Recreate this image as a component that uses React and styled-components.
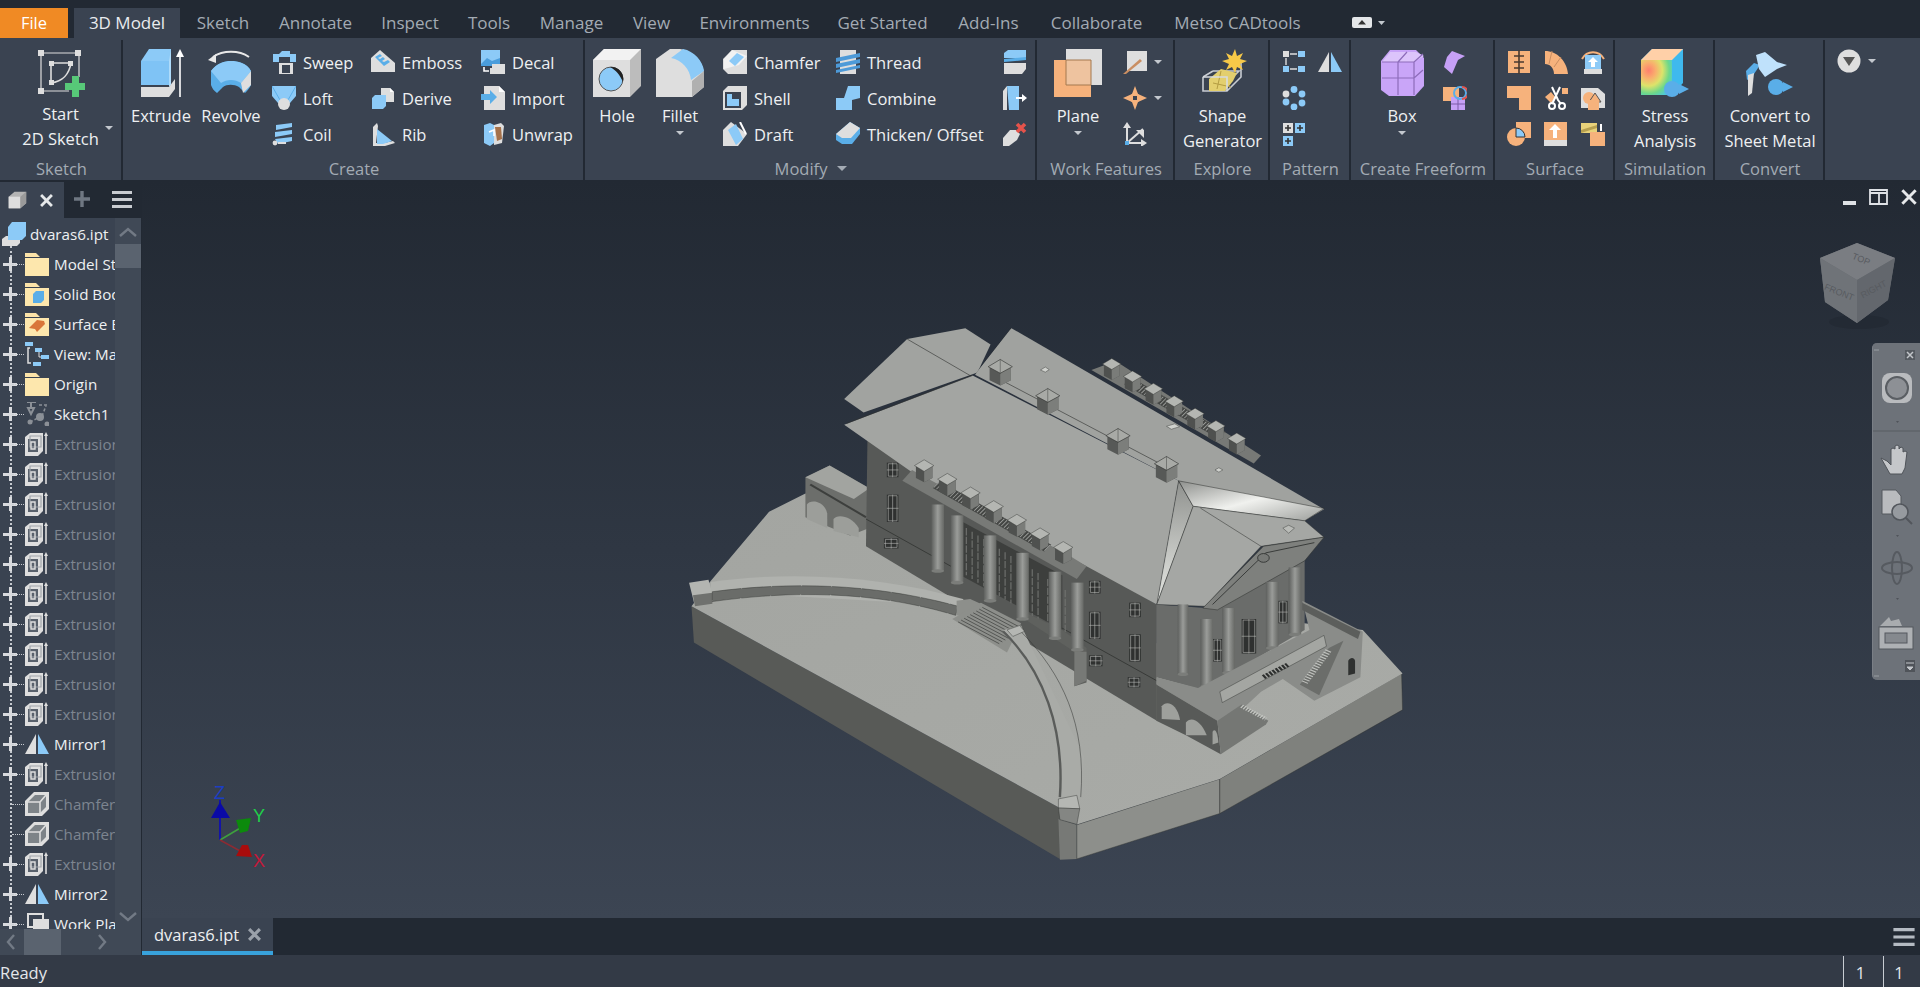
import React from "react";
import styled, { createGlobalStyle } from "styled-components";

const BLUE = "#8ccaf7";
const DBLUE = "#5aaee8";
const GREY = "#dedede";
const MID = "#b4b4b4";
const ORANGE = "#f6b27c";
const PURPLE = "#c6a0f6";
const DARK = "#3a4351";

const GlobalStyle = createGlobalStyle`
  html, body { margin: 0; padding: 0; height: 100%; overflow: hidden; background: #222933; }
  body { font-family: "Open Sans", "Noto Sans", sans-serif; }
  #root { height: 100%; }
`;

const Page = styled.div`
  display: flex;
  flex-direction: column;
  width: 1920px;
  height: 987px;
  overflow: hidden;
`;

const MenuBar = styled.div`
  display: flex;
  align-items: flex-end;
  height: 38px;
  flex: none;
  background: #222933;
`;

const FileTab = styled.div`
  width: 68px;
  height: 30px;
  margin-right: 6px;
  background: #f08a24;
  color: #fff;
  font-size: 16.5px;
  line-height: 30px;
  text-align: center;
`;

const MenuTab = styled.div`
  width: ${(p) => p.$w}px;
  height: 30px;
  margin-right: ${(p) => (p.$active ? 2 : 0)}px;
  font-size: 17px;
  line-height: 30px;
  text-align: center;
  color: ${(p) => (p.$active ? "#e9ecef" : "#a3abb4")};
  background: ${(p) => (p.$active ? DARK : "transparent")};
  white-space: nowrap;
`;

const Ribbon = styled.div`
  display: flex;
  height: 142px;
  flex: none;
  background: ${DARK};
`;

const Panel = styled.div`
  position: relative;
  display: flex;
  flex-direction: column;
  flex: none;
  width: ${(p) => p.$w}px;
  padding-top: 11px;
  box-sizing: border-box;
  &::after {
    content: "";
    position: absolute;
    right: 0;
    top: 2px;
    bottom: 0;
    width: 2px;
    background: ${(p) => (p.$last ? "transparent" : "#222933")};
  }
`;

const PanelBody = styled.div`
  display: flex;
  flex: 1;
  min-height: 0;
  padding-left: ${(p) => p.$pad ?? 0}px;
`;

const PanelTitle = styled.div`
  display: flex;
  justify-content: center;
  align-items: center;
  gap: 10px;
  height: 24px;
  flex: none;
  font-size: 16.5px;
  color: #a3abb4;
  white-space: nowrap;
`;

const LargeTool = styled.div`
  position: relative;
  display: flex;
  flex-direction: column;
  align-items: center;
  flex: none;
  width: ${(p) => p.$w}px;
  margin-left: ${(p) => p.$left ?? 0}px;
  color: #eef0f2;
  font-size: 16.5px;
  line-height: 25px;
  text-align: center;
  white-space: nowrap;
`;

const LargeIcon = styled.div`
  display: flex;
  justify-content: center;
  width: 100%;
  height: 48px;
  margin-bottom: 6px;
`;

const RaisedLabel = styled.span`
  margin-top: -2px;
`;

const Caret = styled.span`
  display: inline-block;
  width: 0;
  height: 0;
  border-left: 4px solid transparent;
  border-right: 4px solid transparent;
  border-top: 4px solid ${(p) => p.$color ?? "#c3c8ce"};
`;

const BelowCaret = styled(Caret)`
  margin-top: 3px;
`;

const SideCaret = styled(Caret)`
  position: absolute;
  right: 8px;
  top: 77px;
`;

const TitleCaret = styled(Caret)`
  border-left-width: 5px;
  border-right-width: 5px;
  border-top-width: 5px;
`;

const ToolColumn = styled.div`
  display: flex;
  flex-direction: column;
  gap: 12px;
  flex: none;
  width: ${(p) => p.$w}px;
  margin-left: ${(p) => p.$left ?? 0}px;
  margin-top: 1px;
`;

const SmallTool = styled.div`
  display: flex;
  align-items: center;
  gap: 7px;
  height: 24px;
  color: #eef0f2;
  font-size: 16.5px;
  white-space: nowrap;
`;

const WorkArea = styled.div`
  display: flex;
  flex: 1;
  min-height: 0;
`;

const Browser = styled.div`
  display: flex;
  flex-direction: column;
  flex: none;
  width: 142px;
  box-sizing: border-box;
  border-right: 1px solid #222933;
`;

const BrowserHead = styled.div`
  display: flex;
  align-items: center;
  height: 38px;
  flex: none;
  background: #222933;
`;

const BrowserTab = styled.div`
  display: flex;
  align-items: center;
  justify-content: space-between;
  box-sizing: border-box;
  align-self: flex-end;
  width: 64px;
  height: 36px;
  padding: 0 11px 0 7px;
  background: ${DARK};
`;

const BrowserHeadTools = styled.div`
  display: flex;
  align-items: center;
  gap: 22px;
  padding-left: 10px;
`;

const TreeWrap = styled.div`
  display: flex;
  flex: 1;
  min-height: 0;
  background: ${DARK};
`;

const Tree = styled.div`
  width: 115px;
  flex: none;
  padding-top: 1px;
  overflow: hidden;
  position: relative;
`;

const TreeGuide = styled.div`
  position: absolute;
  left: 10px;
  top: 28px;
  bottom: 0;
  border-left: 2px dotted #c6cad0;
`;

const TreeRow = styled.div`
  position: relative;
  display: flex;
  align-items: center;
  height: 30px;
  padding-left: ${(p) => (p.$root ? 2 : 25)}px;
  gap: ${(p) => (p.$root ? 4 : 5)}px;
  color: ${(p) => (p.$off ? "#7d8590" : "#eef0f2")};
  font-size: 15.2px;
  white-space: nowrap;
`;

const Expander = styled.div`
  position: absolute;
  left: 3px;
  top: 8px;
  width: 14px;
  height: 14px;
  background:
    linear-gradient(#d8dade, #d8dade) center / 14px 3px no-repeat,
    linear-gradient(#d8dade, #d8dade) center / 3px 14px no-repeat;
`;

const Leader = styled.div`
  position: absolute;
  left: 12px;
  top: 15px;
  width: 12px;
  border-top: 1px dotted #c6cad0;
`;

const VScroll = styled.div`
  position: relative;
  flex: 1;
  background: #404956;
`;

const ScrollThumb = styled.div`
  position: absolute;
  left: 0;
  right: 0;
  top: 26px;
  height: 24px;
  background: #5a636f;
`;

const Chevron = styled.div`
  position: absolute;
  left: 3px;
  ${(p) => (p.$down ? "bottom: 6px;" : "top: 8px;")}
  line-height: 0;
`;

const HScroll = styled.div`
  position: relative;
  height: 26px;
  flex: none;
  background: #404956;
`;

const HThumb = styled.div`
  position: absolute;
  left: 24px;
  top: 0;
  width: 37px;
  height: 100%;
  background: #5a636f;
`;

const HArrow = styled.div`
  position: absolute;
  top: 5px;
  ${(p) => (p.$right ? "left: 97px;" : "left: 6px;")}
  line-height: 0;
`;

const Main = styled.div`
  display: flex;
  flex-direction: column;
  flex: 1;
  min-width: 0;
`;

const Viewport = styled.div`
  position: relative;
  flex: 1;
  overflow: hidden;
  background: linear-gradient(#222933 0%, #3c4553 100%);
`;

const ModelCanvas = styled.svg`
  position: absolute;
  left: 518px;
  top: 130px;
  width: 760px;
  height: 570px;
`;

const Triad = styled.svg`
  position: absolute;
  left: 58px;
  top: 600px;
  width: 100px;
  height: 100px;
`;

const ViewCube = styled.svg`
  position: absolute;
  right: 17px;
  top: 60px;
  width: 90px;
  height: 90px;
`;

const WindowButtons = styled.div`
  position: absolute;
  right: 3px;
  top: 9px;
  display: flex;
  align-items: flex-end;
  gap: 13px;
`;

const NavBar = styled.div`
  position: absolute;
  right: 0;
  top: 163px;
  width: 48px;
  height: 337px;
  border-radius: 5px 0 0 5px;
  background: #6d7279;
  border-left: 1px solid #7a7f86;
  box-sizing: border-box;
`;

const NavIcon = styled.svg`
  position: absolute;
  left: 0;
  top: 0;
  width: 48px;
  height: 337px;
`;

const DocBar = styled.div`
  display: flex;
  justify-content: space-between;
  align-items: center;
  height: 37px;
  flex: none;
  background: #222933;
`;

const DocTab = styled.div`
  display: flex;
  align-items: center;
  gap: 9px;
  box-sizing: border-box;
  width: 131px;
  height: 100%;
  padding-left: 12px;
  background: ${DARK};
  border-bottom: 4px solid #38a2dc;
  color: #eef0f2;
  font-size: 16.5px;
  white-space: nowrap;
`;

const BarMenu = styled.div`
  margin-right: 5px;
  line-height: 0;
`;

const StatusBar = styled.div`
  display: flex;
  align-items: stretch;
  height: 32px;
  flex: none;
  background: #333a46;
  color: #e4e7ea;
  font-size: 16.5px;
`;

const StatusText = styled.div`
  flex: 1;
  line-height: 35px;
`;

const StatusCell = styled.div`
  width: 40px;
  box-sizing: border-box;
  margin-top: 1px;
  padding-right: ${(p) => p.$pad ?? 6}px;
  line-height: 33px;
  text-align: center;
  border-left: 1px solid #c8ccd2;
`;

const StatusLastCell = styled(StatusCell)`
  width: 37px;
`;

const Ico = ({ size = 24, children }) => (
  <svg width={size} height={size} viewBox="0 0 24 24" style={{ flex: "none" }}>
    {children}
  </svg>
);

const Big = ({ children }) => (
  <svg width="48" height="48" viewBox="0 0 48 48">
    {children}
  </svg>
);

const icons = {
  sweep: <><path d="M1 4h6l3-3h8v3h6v8h-6V7H7v5H1z" fill={BLUE} /><path d="M7 13h14v11H7z" fill={GREY} /><path d="M10 15h8v8h-8z" fill="#3a4351" /></>,
  loft: <><path d="M0 0h24v10l-6 7H6L0 10z" fill={BLUE} /><path d="M0 0l8 14M24 0l-8 14" stroke={DBLUE} /><circle cx="12" cy="18" r="6" fill={GREY} /></>,
  coil: <><path d="M4 3l16-2v4L4 8zM3 10l17-2v4L3 15zM3 17l17-2v4L6 22z" fill={BLUE} /><circle cx="3" cy="21" r="2.4" fill={GREY} /><path d="M6 21h8" stroke={GREY} strokeWidth="2" /></>,
  emboss: <><path d="M0 8L9 0l15 13v9H0z" fill={GREY} /><path d="M4 7l5-3 2 2-4 2 2 1 3-2 2 2-3 2 2 1 4-2 2 2-6 4z" fill={DBLUE} /></>,
  derive: <><path d="M10 2h9l4 4v10H10z" fill={GREY} /><path d="M19 2v4h4z" fill="#fff" /><path d="M1 12l3-3h11v11l-3 3H1z" fill={BLUE} /></>,
  rib: <><path d="M2 24V5l4-4 1 3-2 17h8l9-2 2 2-10 3z" fill={GREY} /><path d="M6 7l15 12-9 3H6z" fill={BLUE} /></>,
  decal: <><path d="M0 0h19v16H0z" fill={BLUE} /><path d="M0 14l6-6 5 3 8-3v8H0z" fill="#4a9ddc" /><path d="M11 14h13v10H9v-6h2z" fill={GREY} /><path d="M3 17v4h5" stroke="#fff" strokeWidth="1.6" fill="none" /></>,
  import: <><path d="M3 0h15l6 6v18H3z" fill={GREY} /><path d="M18 0v6h6z" fill="#fff" /><path d="M0 8h9V4l7 7-7 7v-4H0z" fill={DBLUE} /></>,
  unwrap: <><path d="M3 3l6-2 4 2v18l-4 3-6-3z" fill={BLUE} /><path d="M13 3l7-2 3 3-2 17-8 2z" fill={GREY} /><path d="M14 5h6l1 12-5 2z" fill="#a5714a" /><path d="M8 10l5-2v6" stroke="#fff" strokeWidth="1.6" fill="none" /></>,
  chamfer: <><path d="M0 9L9 0h15v24H5L0 19z" fill={GREY} /><path d="M1 19V9l8-9 15 6-8 9z" fill="#f2f2f2" /><path d="M6 11l8-8 7 4-9 9z" fill={BLUE} /></>,
  shell: <><path d="M0 5l5-5h19v19l-5 5H0z" fill={GREY} /><path d="M2 6h16v16H2z" fill="#3a4351" /><path d="M4 8h5v5h7v7H4z" fill={BLUE} /></>,
  draft: <><path d="M0 8l8-8 16 12-9 12H0z" fill={GREY} /><path d="M5 8l8-6 7 15-7 6z" fill={BLUE} /><path d="M17 0l6 12" stroke="#fff" strokeWidth="2" /></>,
  thread: <><path d="M4 0h16v24H4z" fill={GREY} /><path d="M0 8l24-5v4L0 12zM0 14l24-5v4L0 18zM0 20l24-5v3L0 23z" fill="#4d9ad8" /></>,
  combine: <path d="M0 12h8l4-12h12v12l-8 2v10H0z" fill={BLUE} />,
  thicken: <><path d="M0 12L14 0l10 6v6l-8 10H6l-6-4z" fill={DBLUE} /><path d="M0 12L14 0l10 6-9 10H6z" fill={GREY} /></>,
  split: <><path d="M1 3l4-3h18v8H1z" fill={BLUE} /><path d="M1 9l22-2v3L1 12z" fill={DBLUE} /><path d="M1 13h22v6l-4 5H1z" fill={GREY} /></>,
  move: <><path d="M0 5l4-5v24H0z" fill={GREY} /><path d="M4 0h12v24H6z" fill={BLUE} /><path d="M13 11h6V8l5 4-5 4v-3h-6z" fill="#fff" /></>,
  delete: <><path d="M0 16l7-8h6l4 4-3 6-8 6H0z" fill={GREY} /><path d="M14 2l8 8M22 2l-8 8" stroke="#e5534b" strokeWidth="3.6" /></>,
  workaxis: <><path d="M4 1h20v20H4z" fill={GREY} /><path d="M0 24L17 9l2 2L3 24z" fill="#c98e62" /></>,
  workpoint: <><path d="M12 0l3 8 9 4-9 4-3 8-3-8-9-4 9-4z" fill={ORANGE} /><circle cx="12" cy="12" r="5" fill={ORANGE} /><rect x="10" y="10" width="4" height="4" fill="#3a4351" /></>,
  ucs: <><path d="M4 4v17h17" stroke={GREY} strokeWidth="2" fill="none" /><path d="M4 0l4 6H0zM24 21l-6 4v-8z" fill={GREY} /><path d="M4 21L20 7" stroke={GREY} strokeWidth="2" /><path d="M13 8h8v8z" fill={GREY} /><rect x="2" y="19" width="4" height="4" fill={DBLUE} /></>,
  rect: <><rect x="1" y="1" width="6" height="6" fill={GREY} /><rect x="16" y="1" width="7" height="6" fill={BLUE} /><rect x="1" y="16" width="6" height="6" fill={BLUE} /><rect x="16" y="16" width="7" height="6" fill={BLUE} /><path d="M8 4h7M8 19h7M4 8v7" stroke={GREY} strokeWidth="1.4" /></>,
  mirror: <><path d="M11 2v20H0z" fill={GREY} /><path d="M13 2v20h11z" fill={BLUE} /></>,
  circ: <><circle cx="12" cy="3.5" r="3.4" fill={BLUE} /><circle cx="20" cy="8" r="3.4" fill={BLUE} /><circle cx="20" cy="17" r="3.4" fill={BLUE} /><circle cx="12" cy="21" r="3.4" fill={BLUE} /><circle cx="4" cy="16" r="3.4" fill={BLUE} /><circle cx="4" cy="8" r="3.4" fill={GREY} /></>,
  sketchpat: <><rect x="1" y="1" width="10" height="10" fill={GREY} /><rect x="13" y="1" width="10" height="10" fill={BLUE} /><rect x="1" y="14" width="10" height="10" fill={BLUE} /><path d="M3 6h6M6 3v6M15 6h6M18 3v6M3 19h6M6 16v6" stroke="#333" strokeWidth="1.6" /></>,
  freeface: <path d="M1 17l3-10 5-6 13 5-7 4-3 7-3 7z" fill={PURPLE} />,
  freeconv: <><rect x="0" y="1" width="16" height="14" fill={ORANGE} /><path d="M8 11h14v13H8z" fill={PURPLE} /><path d="M15 11v13M8 18h14" stroke="#7d5aa8" /><circle cx="17" cy="7" r="6" fill="none" stroke={DBLUE} strokeWidth="2" /><path d="M19 1a6 6 0 0 1 0 12" stroke="#e5534b" strokeWidth="2" fill="none" /></>,
  s1: <><rect x="1" y="1" width="22" height="22" fill={ORANGE} /><path d="M12 0v24M7 6h10M7 12h10M7 18h10" stroke="#4a3a30" strokeWidth="1.6" /></>,
  s2: <><path d="M1 1c12 0 22 10 23 23H10C10 18 6 14 1 14z" fill={ORANGE} /><path d="M8 1l-3 13M17 7l-7 10" stroke="#c98e62" /></>,
  s3: <><path d="M1 9c5-9 17-9 22 0" fill="none" stroke={ORANGE} strokeWidth="2" /><rect x="4" y="5" width="16" height="14" fill={BLUE} /><path d="M12 7l5 5h-3v5h-4v-5H7z" fill="#fff" /><rect x="3" y="19" width="18" height="5" fill={GREY} /></>,
  s4: <path d="M0 0h24v24H12V12H0z" fill={ORANGE} />,
  s5: <><rect x="18" y="2" width="6" height="6" fill={ORANGE} /><path d="M1 11l6-5 5 6-5 5z" fill={ORANGE} /><path d="M8 1l6 13 3 4M16 1l-6 13-2 4" stroke="#fff" strokeWidth="2" fill="none" /><circle cx="8" cy="20" r="3" fill="none" stroke="#fff" strokeWidth="2" /><circle cx="18" cy="20" r="3" fill="none" stroke="#fff" strokeWidth="2" /></>,
  s6: <><path d="M0 2h17l7 6v14H0z" fill={GREY} /><circle cx="8" cy="12" r="6" fill={ORANGE} /><path d="M14 7l6 9H8z" fill={ORANGE} stroke="#555" /><rect x="7" y="14" width="11" height="10" fill={ORANGE} /></>,
  s7: <><circle cx="9" cy="15" r="9" fill={ORANGE} /><path d="M9 0h15v16H9z" fill={ORANGE} /><path d="M9 6a9 9 0 0 1 9 9H9z" fill={BLUE} stroke="#333" /></>,
  s8: <><rect x="0" y="0" width="23" height="18" fill={ORANGE} /><path d="M11 2l6 6h-4v8h-4V8H5z" fill="#fff" /><rect x="0" y="18" width="23" height="6" fill={GREY} /></>,
  s9: <><rect x="0" y="1" width="16" height="10" fill="#e8d27a" /><path d="M0 8l16-5v3L0 11z" fill="#b7a04f" /><rect x="9" y="10" width="15" height="14" fill={ORANGE} /><path d="M20 2v7" stroke="#fff" strokeWidth="2" /></>,
  cube: <><path d="M2 8l7-6h14v14l-7 6H2z" fill={MID} /><path d="M2 8h14v14H2z" fill={GREY} /><path d="M16 8l7-6v14l-7 6z" fill="#9a9a9a" /></>,
  root: <><path d="M0 17l4-3h14v7l-3 3H0z" fill={GREY} /><path d="M6 5l4-5h14v14l-4 4H6z" fill={BLUE} /></>,
  folder: <><path d="M0 1h11l4 4H0z" fill="#fbe3a8" /><path d="M0 6h24v18H0z" fill="#fde7ad" /></>,
  solid: <><path d="M0 1h11l4 4H0z" fill="#fbe3a8" /><path d="M0 6h24v18H0z" fill="#fde7ad" /><path d="M8 12l3-3h8v9l-3 3H8z" fill={DBLUE} /></>,
  surface: <><path d="M0 1h11l4 4H0z" fill="#fbe3a8" /><path d="M0 6h24v18H0z" fill="#fde7ad" /><path d="M4 16l8-8 7 1 1 3-8 8-2-3z" fill="#d9763a" /></>,
  view: <><rect x="0" y="0" width="8" height="4" fill={BLUE} /><path d="M5 6H3v15h3" stroke={GREY} strokeWidth="1.5" fill="none" /><rect x="10" y="6" width="7" height="4" fill={BLUE} /><rect x="16" y="13" width="8" height="4" fill={BLUE} /><rect x="8" y="20" width="8" height="4" fill={BLUE} /><path d="M14 10v5h2" stroke={GREY} fill="none" /></>,
  sketch: <><path d="M2 0h9M6 0v6M3 6h6l-3 6z" stroke="#8b9097" strokeWidth="2" fill="none" /><path d="M5 20l12-6M17 14l4-10M14 3h8" stroke="#8b9097" strokeWidth="1.5" strokeDasharray="3 2" /><circle cx="15" cy="15" r="4" fill="#8b9097" /><circle cx="5" cy="20" r="2.5" fill="#8b9097" /><circle cx="22" cy="22" r="2.5" fill="#8b9097" /></>,
  extrusion: <><path d="M0 5l5-4h13v18l-5 5H0z" fill={GREY} /><path d="M3 7h10v13H3z" fill="#59616c" /><path d="M5 4h11v11H5z" fill="none" stroke="#9fa4aa" strokeWidth="1.2" /><path d="M6 10h4v7H6z" fill="none" stroke={GREY} strokeWidth="1.4" /><path d="M21 2v20" stroke={GREY} strokeWidth="1.6" /><path d="M21 0l2 4h-4z" fill={GREY} /></>,
  chamferTree: <><path d="M0 9L9 0h15v17l-7 7H0z" fill={GREY} /><path d="M3 10l7-7h11v12l-6 6H3z" fill="#7d8388" /><path d="M3 10h12v11M15 10l6-7" stroke={GREY} strokeWidth="1.6" fill="none" /></>,
  workplane: <><path d="M3 2h15v13H3z" fill="none" stroke={GREY} strokeWidth="2" /><path d="M8 7h16v13H8z" fill={GREY} /></>,
};

const Small = ({ icon, label }) => (
  <SmallTool>
    <Ico>{icons[icon]}</Ico>
    {label}
  </SmallTool>
);

const IconOnly = ({ icon, caret }) => (
  <SmallTool>
    <Ico>{icons[icon]}</Ico>
    {caret && <Caret />}
  </SmallTool>
);

const StartIcon = () => (
  <Big>
    <path d="M4 4h36M4 4v38M4 42h28M42 4v24" stroke={GREY} strokeWidth="1.2" fill="none" />
    <path d="M1 1h6v6H1zM38 1h6v6h-6zM1 39h6v6H1z" fill={GREY} />
    <path d="M14 14h20M14 14v20M14 34c12-2 18-8 20-20" stroke={GREY} strokeWidth="1.6" fill="none" />
    <path d="M12 12h5v5h-5zM31 12h5v5h-5zM12 31h5v5h-5z" fill={GREY} />
    <path d="M35 27h7v7h7v7h-7v7h-7v-7h-7v-7h7z" fill="#57c878" />
  </Big>
);
const ExtrudeIcon = () => (
  <Big>
    <path d="M4 12l8-12h22v36H4z" fill={BLUE} />
    <path d="M4 12h28v24H4z" fill="#7fc3f5" />
    <path d="M32 12l2-12v36l-2 2z" fill="#aedbfa" />
    <path d="M4 38h28l6-8v10l-6 8H4z" fill={GREY} />
    <path d="M43 48V4" stroke="#fff" strokeWidth="1.6" />
    <path d="M43 0l4 8h-8z" fill="#fff" />
  </Big>
);
const RevolveIcon = () => (
  <Big>
    <path d="M4 22c6-8 14-10 20-10s16 2 20 10v14c-2 4-4 6-6 8l-6-6c-5-3-12-3-16 0l-6 6c-3-2-5-5-6-8z" fill={DBLUE} />
    <path d="M4 22c6-8 14-10 20-10s16 2 20 10l-10 12c-6-4-14-4-20 0z" fill={BLUE} />
    <path d="M34 34l10-12v14l-8 8z" fill={GREY} />
    <path d="M6 8c10-7 26-7 36 0" stroke="#e8e8e8" strokeWidth="2" fill="none" />
    <path d="M1 11l8-6v9z" fill="#e8e8e8" />
  </Big>
);
const HoleIcon = () => (
  <Big>
    <path d="M0 11L11 0h37v37L37 48H0z" fill="#bcbcbc" />
    <path d="M0 11L11 0h37L37 11z" fill="#f2f2f2" />
    <path d="M0 11h37v37H0z" fill={GREY} />
    <circle cx="18" cy="30" r="12" fill={BLUE} stroke="#555" strokeWidth="1" />
    <path d="M17 18c8-1 15 6 13 15-3-7-7-12-13-15z" fill="#222" />
  </Big>
);
const FilletIcon = () => (
  <Big>
    <path d="M0 10L14 0h10c14 2 24 14 24 26v12l-12 10H0z" fill={GREY} />
    <path d="M15 9L27 0c11 2 20 12 21 22l-13 9C34 20 26 11 15 9z" fill={BLUE} />
    <path d="M36 48V32l12-10v16z" fill="#b0b0b0" />
  </Big>
);
const PlaneIcon = () => (
  <Big>
    <rect x="12" y="0" width="36" height="36" fill={GREY} />
    <rect x="0" y="11" width="37" height="37" fill={ORANGE} />
    <path d="M12 11h25v25H12z" fill="#eec39f" stroke="#a4784f" />
  </Big>
);
const ShapeIcon = () => (
  <Big>
    <path d="M14 22h26l-4 4M4 28l10-6M4 28v14h24l14-14V14" stroke="#c8ccd2" strokeWidth="1.6" fill="none" />
    <path d="M10 30l12-10 16 4-4 8-8 10H10z" fill="#e3cf6e" />
    <path d="M22 22l-4 18M14 34l18 4" stroke="#b49d42" />
    <path d="M4 28h24v14" stroke="#d8dbe0" strokeWidth="1.6" fill="none" />
    <path d="M36 0l2 7 6-3-3 6 7 2-7 3 3 6-6-3-2 6-3-6-6 3 3-6-7-3 7-2-3-6 6 3z" fill="#f7c948" />
  </Big>
);
const BoxIcon = () => (
  <Big>
    <path d="M3 12l9-11h26l8 8v28l-9 10H11l-8-6z" fill="#c7a3f7" />
    <path d="M4 13h32v33H11l-7-6zM36 13l9-8v32l-9 9z" fill="#c9a5f8" />
    <path d="M4 13l8-10h26l8 4-10 6z" fill="#dcc4fb" />
    <path d="M20 13v33M4 29h32M36 13v33M4 13h32M36 13l9-8M36 29l9-8M20 13l9-10" stroke="#8d6cba" strokeWidth="1.2" fill="none" />
  </Big>
);
const StressIcon = () => (
  <Big>
    <defs>
      <radialGradient id="stress" cx="25%" cy="30%" r="85%">
        <stop offset="0%" stopColor="#ff7f6e" />
        <stop offset="28%" stopColor="#f8b26d" />
        <stop offset="52%" stopColor="#dde36a" />
        <stop offset="78%" stopColor="#6dd88a" />
        <stop offset="100%" stopColor="#4fc9d9" />
      </radialGradient>
    </defs>
    <path d="M0 11L11 0h31v34L31 46H0z" fill="#3fb9ee" />
    <path d="M0 11L11 0h31L31 11z" fill="#ffd0a8" />
    <path d="M0 11h31v35H0z" fill="url(#stress)" />
    <circle cx="31" cy="40" r="8" fill={DBLUE} />
    <path d="M38 35l10 5-10 5z" fill={DBLUE} />
  </Big>
);
const ConvertIcon = () => (
  <Big>
    <path d="M0 22l8-8 6 2-8 12-5 3z" fill={DBLUE} />
    <path d="M10 6l9-3 12 10 10 3-10 4-12 8-6-8z" fill="#bfe1fb" />
    <path d="M2 26l6-2-2 20-4 3z" fill={GREY} />
    <circle cx="30" cy="38" r="8" fill={DBLUE} />
    <path d="M37 33l10 5-10 5z" fill={DBLUE} />
  </Big>
);

const Dropdown = () => (
  <svg width="24" height="24" viewBox="0 0 24 24">
    <circle cx="12" cy="12" r="11.5" fill={GREY} />
    <path d="M6 8h12l-6 9z" fill="#555" />
  </svg>
);

const CloseIcon = ({ size = 12, color = "#dfe2e6", w = 2.6 }) => (
  <svg width={size} height={size} viewBox="0 0 12 12">
    <path d="M1 1l10 10M11 1L1 11" stroke={color} strokeWidth={w} />
  </svg>
);

const PlusIcon = () => (
  <svg width="16" height="16" viewBox="0 0 16 16">
    <path d="M8 0v16M0 8h16" stroke="#6f7782" strokeWidth="3.4" />
  </svg>
);

const Burger = ({ w = 20, h = 17, color = "#c9ccd1" }) => (
  <svg width={w} height={h} viewBox="0 0 20 17">
    <path d="M0 1.5h20M0 8.5h20M0 15.5h20" stroke={color} strokeWidth="3" />
  </svg>
);

const ChevronIcon = ({ dir }) => {
  const paths = {
    up: "M2 10l8-7 8 7",
    down: "M2 3l8 7 8-7",
    left: "M8 1L2 8l6 7",
    right: "M2 1l6 7-6 7",
  };
  const horiz = dir === "left" || dir === "right";
  return (
    <svg width={horiz ? 10 : 20} height={horiz ? 16 : 13} viewBox={horiz ? "0 0 10 16" : "0 0 20 13"}>
      <path d={paths[dir]} stroke="#727a85" strokeWidth="2.4" fill="none" />
    </svg>
  );
};

const treeRows = [
  ["folder", "Model States:"],
  ["solid", "Solid Bodies(1)"],
  ["surface", "Surface Bodies(1)"],
  ["view", "View: Master"],
  ["folder", "Origin"],
  ["sketch", "Sketch1"],
  ...Array.from({ length: 10 }, (_, i) => ["extrusion", `Extrusion${i + 1}`, true]),
  ["mirror", "Mirror1"],
  ["extrusion", "Extrusion11", true],
  ["chamferTree", "Chamfer1", true, true],
  ["chamferTree", "Chamfer2", true, true],
  ["extrusion", "Extrusion12", true],
  ["mirror", "Mirror2"],
  ["workplane", "Work Plane1"],
];

const tabs = [
  ["Sketch", 82], ["Annotate", 103], ["Inspect", 86], ["Tools", 72], ["Manage", 93], ["View", 67],
  ["Environments", 139], ["Get Started", 117], ["Add-Ins", 95], ["Collaborate", 121], ["Metso CADtools", 161],
];

// roof posts sit along a line, so positions get worked out from two end points
const along = (x0, y0, x1, y1, n) =>
  Array.from({ length: n }, (_, i) => [x0 + ((x1 - x0) * i) / (n - 1), y0 + ((y1 - y0) * i) / (n - 1)]);

const Post = ({ x, y, s = 1 }) => (
  <g transform={`translate(${x} ${y}) scale(${s})`}>
    <path d="M-17 -12L0 -24 17 -12V22L0 34-17 22z" fill="#4f514f" />
    <path d="M0 4L17 -12V22L0 34z" fill="#7a7c79" />
    <path d="M-20 -12L0 -28 20 -12 0 4z" fill="#b4b6b2" stroke="#2d2f2e" strokeWidth="1" />
  </g>
);

const Chimney = ({ x, y }) => (
  <g transform={`translate(${x} ${y})`}>
    <path d="M-22 0L0 -12 22 0V35L0 50-22 35z" fill="#575957" />
    <path d="M0 15L22 0V35L0 50z" fill="#7c7e7b" />
    <path d="M-25 -2L0 -22 25 -2 0 16z" fill="#a8aaa6" stroke="#2d2f2e" strokeWidth="1.4" />
    <path d="M0 -22V16" stroke="#2d2f2e" strokeWidth="1" />
  </g>
);

const Win = ({ x, y, w = 24, h = 60 }) => (
  <g>
    <rect x={x} y={y} width={w} height={h} fill="#2f3130" />
    <path d={`M${x + 3} ${y + 3}h${w - 6}v${h - 6}h-${w - 6}zM${x} ${y + h / 2}h${w}M${x + w / 2} ${y}v${h}`} fill="none" stroke="#b5b7b3" strokeWidth="1.4" />
  </g>
);

const Column = ({ x, top, bottom, w = 26 }) => (
  <g>
    <rect x={x} y={top} width={w} height={bottom - top} fill="url(#col)" />
    <ellipse cx={x + w / 2} cy={bottom} rx={w / 2} ry="5" fill="#7b7d7a" />
  </g>
);

const Building = () => (
  <ModelCanvas viewBox="0 0 1568 1568" preserveAspectRatio="none">
    <defs>
      <linearGradient id="col" x1="0" x2="1" y1="0" y2="0">
        <stop offset="0%" stopColor="#5d5f5d" />
        <stop offset="50%" stopColor="#9a9c99" />
        <stop offset="100%" stopColor="#666865" />
      </linearGradient>
      <linearGradient id="hip" x1="0" x2="1" y1="0" y2="1">
        <stop offset="0%" stopColor="#8d8f8c" />
        <stop offset="50%" stopColor="#f0f1ee" />
        <stop offset="100%" stopColor="#9c9e9b" />
      </linearGradient>
      <linearGradient id="hip2" x1="0" x2="0" y1="0" y2="1">
        <stop offset="0%" stopColor="#8f918e" />
        <stop offset="70%" stopColor="#cfd1cd" />
        <stop offset="100%" stopColor="#e0e2de" />
      </linearGradient>
      <linearGradient id="ground" x1="0" x2="1" y1="0" y2="1">
        <stop offset="0%" stopColor="#a3a5a1" />
        <stop offset="100%" stopColor="#a9aba7" />
      </linearGradient>
    </defs>
    <g strokeLinejoin="round">
      {/* plinth */}
      <path d="M65 815L825 1370 825 1510 70 915z" fill="#585a57" />
      <path d="M822 1400L860 1416V1510L825 1512z" fill="#777976" />
      <path d="M860 1416L1155 1290V1385L860 1510z" fill="#8d8f8b" stroke="#2d2f2e" strokeWidth="1" />
      <path d="M1155 1290L1530 1000 1532 1100 1155 1385z" fill="#7f817d" stroke="#2d2f2e" strokeWidth="1" />
      <path d="M65 815L105 745 225 555 300 505 1000 900 1150 1000 1320 860 1450 880 1532 1000 1155 1290 860 1415 825 1370z" fill="url(#ground)" />

      {/* left terrace */}
      <path d="M300 460L350 428 432 490 432 600 392 620 300 570z" fill="#6c6e6b" />
      <path d="M300 460L350 428 432 490 400 520z" fill="#a2a4a0" />
      <path d="M303 575V535C310 520 340 525 345 560V600z" fill="#9c9e9a" />
      <path d="M358 608V575C365 560 395 565 410 600V625z" fill="#9c9e9a" />
      <path d="M310 480L425 570" stroke="#3d3f3d" strokeWidth="5" />

      {/* back balustrade */}
      <path d="M890 165L940 140 1240 400 1225 422z" fill="#777976" />
      <path d="M965 195L1160 345" stroke="#444644" strokeWidth="24" />
      <path d="M965 195L1160 345" stroke="#a0a29f" strokeWidth="20" strokeDasharray="2 5" />
      {along(932, 160, 1190, 365, 7).map(([x, y]) => <Post key={x} x={x} y={y} s={0.95} />)}

      {/* left wing */}
      <path d="M380 245L510 80 630 50 682 95 655 172 420 282z" fill="#a1a3a0" />
      <path d="M510 80L642 182" stroke="#2d2f2e" strokeWidth="1.4" />
      <path d="M652 175L725 50 700 150z" fill="url(#hip2)" stroke="#2d2f2e" strokeWidth="1" />

      {/* front wall */}
      <path d="M428 355L1025 810V1130L425 650z" fill="#575957" />
      <path d="M425 575L1025 1020" stroke="#333533" strokeWidth="2" />
      <Win x={468} y={420} h={40} /><Win x={468} y={508} h={75} /><Win x={462} y={628} w={30} h={28} />
      <Win x={885} y={745} h={35} /><Win x={885} y={830} h={75} /><Win x={885} y={950} w={28} h={30} />
      <Win x={968} y={805} h={40} /><Win x={968} y={892} h={75} /><Win x={965} y={1010} w={26} h={28} />
      <path d="M620 580L830 730V880L620 730z" fill="#3d3f3d" />
      {along(632, 600, 800, 740, 4).map(([x, y]) => (
        <path key={x} d={`M${x} ${y}v130M${x + 12} ${y + 10}v130M${x + 24} ${y + 20}v130M${x + 36} ${y + 30}v130`} stroke="#6f716e" strokeWidth="2.4" strokeDasharray="20 4" />
      ))}
      <path d="M752 850L855 940V1035L880 1025V930L830 880 750 830z" fill="#5f615e" />
      <path d="M855 940H880V1020L855 1035z" fill="#777976" />
      <Column x={560} top={535} bottom={718} /><Column x={600} top={565} bottom={750} />
      <Column x={668} top={620} bottom={800} /><Column x={735} top={668} bottom={850} />
      <Column x={802} top={720} bottom={903} /><Column x={848} top={750} bottom={935} />

      {/* back half and front half of main roof */}
      <path d="M650 178L725 50 1370 548 1330 580 1070 470z" fill="#a0a29f" />
      <path d="M380 316L645 180 1070 470 1025 810 880 705 545 470z" fill="#a3a5a2" />
      <path d="M385 312L645 180" stroke="#2d2f2e" strokeWidth="1.4" />
      <path d="M700 190L1045 432" stroke="#2d2f2e" strokeWidth="1.4" />
      <path d="M785 165l10-8 8 7-8 7z M1045 320l17-7 10 8-17 7z M1145 440l8-6 8 6-8 6z" fill="#cfd1cd" stroke="#2d2f2e" />

      {/* front balustrade */}
      <path d="M520 440L850 680 880 705 860 740 500 470z" fill="#787a77" />
      <path d="M570 480L800 655" stroke="#444644" strokeWidth="24" />
      <path d="M570 480L800 655" stroke="#a0a29f" strokeWidth="20" strokeDasharray="2 5" />
      {along(545, 440, 832, 665, 7).map(([x, y]) => <Post key={x} x={x} y={y} />)}

      <Chimney x={702} y={158} /><Chimney x={800} y={238} />
      <Chimney x={945} y={348} /><Chimney x={1045} y={425} />

      {/* hip faces */}
      <path d="M1070 470L1100 540 1025 810z" fill="url(#hip2)" stroke="#2d2f2e" strokeWidth="1.2" />
      <path d="M1070 470L1370 546 1330 580 1100 540z" fill="url(#hip)" stroke="#2d2f2e" strokeWidth="1.2" />

      {/* portico */}
      <path d="M1024 810L1125 820 1330 690V880L1120 1045 1024 1010z" fill="#6a6c6a" />
      <path d="M1100 540L1330 580 1370 625 1240 650 1125 815 1025 810z" fill="#a5a7a4" stroke="#2d2f2e" strokeWidth="1" />
      <path d="M1115 545L1240 650" stroke="#2d2f2e" strokeWidth="1.2" />
      <path d="M1120 820L1245 650 1370 625 1330 690 1150 825z" fill="#7e807d" stroke="#2d2f2e" strokeWidth="1.2" />
      <path d="M1140 810L1250 668 1350 640" fill="none" stroke="#2d2f2e" strokeWidth="2" />
      <circle cx="1245" cy="682" r="12" fill="#777976" stroke="#2d2f2e" strokeWidth="2" />
      <path d="M1285 600l12-8 12 8-12 14z" fill="#b9bbb7" stroke="#2d2f2e" />
      <Win x={1140} y={905} w={20} h={62} /><Win x={1200} y={850} w={30} h={95} /><Win x={1275} y={800} w={20} h={62} />
      <Column x={1068} top={810} bottom={1002} w={22} /><Column x={1115} top={850} bottom={1035} />
      <Column x={1160} top={820} bottom={998} /><Column x={1250} top={748} bottom={930} />
      <Column x={1297} top={708} bottom={893} />

      {/* right terrace */}
      <path d="M1024 1010L1110 1040 1340 880 1325 800 1450 885 1445 1010 1350 1075 1285 1015 1240 1050 1200 1100 1150 1130 1024 1030z" fill="#8a8c89" />
      <path d="M1325 805L1445 885 1440 905 1325 825z" fill="#5c5e5c" />
      <path d="M1155 1050L1370 895 1375 925 1160 1080z" fill="#a4a6a2" stroke="#2d2f2e" />
      <path d="M1245 1010l50-34" stroke="#2d2f2e" strokeWidth="12" strokeDasharray="5 3" />
      <path d="M1320 1030L1380 930 1410 910 1360 1060z" fill="#6b6d6a" />
      <path d="M1330 1025l50-90" stroke="#bfc1bd" strokeWidth="14" strokeDasharray="3 4" />
      <path d="M1420 1005V965c4-10 12-10 14 0v35z" fill="#2f3130" />
      <path d="M1024 1030L1150 1130 1157 1222 1085 1170 1024 1130z" fill="#585a58" />
      <path d="M1035 1125V1090c10-18 32-8 38 38z" fill="#9ea09c" />
      <path d="M1085 1170V1135c10-18 30-8 43 35z" fill="#9ea09c" />
      <path d="M1140 1195V1160c3-8 10-8 12 30z" fill="#9ea09c" />
      <path d="M1168 1195V1150c4-8 10-6 12 0v35z" fill="#2f3130" />
      <path d="M1150 1130L1200 1085 1255 1130 1250 1140 1157 1222z" fill="#757774" />
      <path d="M1200 1090l50 35" stroke="#c4c6c2" strokeWidth="10" strokeDasharray="3 3" />

      {/* curved retaining walls and stairs */}
      <path d="M60 750L100 742 108 780 72 815z" fill="#b3b5b1" />
      <path d="M68 785L108 778V808L72 815z" fill="#6f716e" />
      <path d="M105 748C280 715 470 735 625 795L635 815 105 775z" fill="#b0b2ae" />
      <path d="M108 775C280 745 450 755 615 815L610 840C450 775 280 770 108 802z" fill="#6a6c69" stroke="#2d2f2e" strokeWidth="1" strokeDasharray="60 2" />
      <path d="M612 800L640 795 665 810 635 845 612 840z" fill="#8d8f8b" />
      <path d="M603 850L662 805 745 862 716 942z" fill="#8d8f8b" />
      {along(615, 858, 665, 818, 9).map(([x, y]) => (
        <path key={x} d={`M${x} ${y}l${85} ${60}`} stroke="#2d2f2e" strokeWidth="1.4" />
      ))}
      <path d="M708 880L745 868 875 1230 868 1340 825 1340C840 1150 790 990 715 890z" fill="#a9aba7" />
      <path d="M708 884C790 990 835 1150 825 1340" fill="none" stroke="#5a5c5a" strokeWidth="5" />
      <path d="M745 885C830 1000 880 1140 868 1340" fill="none" stroke="#2d2f2e" strokeWidth="1.2" />
      <path d="M822 1345L860 1335 866 1372 822 1370z" fill="#b5b7b3" stroke="#2d2f2e" />
      <path d="M822 1370L866 1372 860 1415 825 1402z" fill="#848683" stroke="#2d2f2e" />
      <path d="M716 880l26-12 10 16-24 14z" fill="#b5b7b3" stroke="#2d2f2e" />
    </g>
  </ModelCanvas>
);

const NavBarArt = () => (
  <NavIcon viewBox="0 0 48 337">
    <rect x="32" y="7" width="10" height="10" fill="#555a60" />
    <path d="M34 9l6 6M40 9l-6 6" stroke="#c3c6ca" strokeWidth="1.5" />
    <path d="M1 7h5M1 333h5" stroke="#999da3" />
    <rect x="9" y="30" width="30" height="30" rx="8" fill="#b9bbbe" />
    <circle cx="24" cy="45" r="11" fill="#8d9095" stroke="#5a5e63" strokeWidth="2" />
    <path d="M23 78h3l-1.5 2z" fill="#50545a" />
    <path d="M0 88h48" stroke="#585c62" />
    <path d="M8 115l6 3 4 4v-16l2-1 2 1v-3l2-1 2 1v3l2-2 2 1v4l2-1 2 1-2 16-3 6h-12z" fill="#c5c7ca" stroke="#4f5359" />
    <path d="M9 147h14l5 6v18H9z" fill="#b9bbbe" stroke="#55595f" />
    <circle cx="27" cy="169" r="8" fill="#969a9f" stroke="#52565c" strokeWidth="1.6" />
    <path d="M33 175l6 6" stroke="#52565c" strokeWidth="2" />
    <path d="M23 192h3l-1.5 2z" fill="#50545a" />
    <ellipse cx="24" cy="225" rx="15" ry="6" fill="none" stroke="#565a60" strokeWidth="2" />
    <ellipse cx="24" cy="225" rx="5" ry="16" fill="none" stroke="#565a60" strokeWidth="2" />
    <path d="M23 255h3l-1.5 2z" fill="#50545a" />
    <path d="M7 283l9-9 2 4 8-2 3 7z" fill="#a9acaf" />
    <rect x="6" y="284" width="34" height="22" fill="#aeb1b4" stroke="#55595f" />
    <rect x="12" y="290" width="22" height="10" fill="#85898e" stroke="#55595f" />
    <rect x="32" y="317" width="10" height="12" fill="#50545a" />
    <path d="M33 320h8M34 324h6l-3 3z" stroke="#c3c6ca" fill="#c3c6ca" />
  </NavIcon>
);

const ViewStyleIcon = styled.svg`
  width: 34px;
  height: 12px;
  margin: 0 0 9px 34px;
`;

export default function App() {
  return (
    <Page>
      <GlobalStyle />
      <MenuBar>
        <FileTab>File</FileTab>
        <MenuTab $active $w={106}>3D Model</MenuTab>
        {tabs.map(([t, w]) => (
          <MenuTab key={t} $w={w}>{t}</MenuTab>
        ))}
        <ViewStyleIcon viewBox="0 0 34 12">
          <rect x="0" y="0" width="20" height="11" rx="2" fill="#e4e6e9" />
          <path d="M6 7.5h8L10 3z" fill="#333" />
          <path d="M26 4h7l-3.5 4z" fill="#c3c8ce" />
        </ViewStyleIcon>
      </MenuBar>

      <Ribbon>
        <Panel $w={123}>
          <PanelBody>
            <LargeTool $w={121}>
              <LargeIcon><StartIcon /></LargeIcon>
              <RaisedLabel>Start</RaisedLabel>
              <span>2D Sketch</span>
              <SideCaret />
            </LargeTool>
          </PanelBody>
          <PanelTitle>Sketch</PanelTitle>
        </Panel>

        <Panel $w={462}>
          <PanelBody $pad={3}>
            <LargeTool $w={70}>
              <LargeIcon><ExtrudeIcon /></LargeIcon>Extrude
            </LargeTool>
            <LargeTool $w={70}>
              <LargeIcon><RevolveIcon /></LargeIcon>Revolve
            </LargeTool>
            <ToolColumn $w={99} $left={6}>
              <Small icon="sweep" label="Sweep" />
              <Small icon="loft" label="Loft" />
              <Small icon="coil" label="Coil" />
            </ToolColumn>
            <ToolColumn $w={110}>
              <Small icon="emboss" label="Emboss" />
              <Small icon="derive" label="Derive" />
              <Small icon="rib" label="Rib" />
            </ToolColumn>
            <ToolColumn $w={100}>
              <Small icon="decal" label="Decal" />
              <Small icon="import" label="Import" />
              <Small icon="unwrap" label="Unwrap" />
            </ToolColumn>
          </PanelBody>
          <PanelTitle>Create</PanelTitle>
        </Panel>

        <Panel $w={452}>
          <PanelBody>
            <LargeTool $w={64}>
              <LargeIcon><HoleIcon /></LargeIcon>Hole
            </LargeTool>
            <LargeTool $w={62}>
              <LargeIcon><FilletIcon /></LargeIcon>Fillet
              <BelowCaret />
            </LargeTool>
            <ToolColumn $w={113} $left={12}>
              <Small icon="chamfer" label="Chamfer" />
              <Small icon="shell" label="Shell" />
              <Small icon="draft" label="Draft" />
            </ToolColumn>
            <ToolColumn $w={167}>
              <Small icon="thread" label="Thread" />
              <Small icon="combine" label="Combine" />
              <Small icon="thicken" label="Thicken/ Offset" />
            </ToolColumn>
            <ToolColumn $w={24}>
              <IconOnly icon="split" />
              <IconOnly icon="move" />
              <IconOnly icon="delete" />
            </ToolColumn>
          </PanelBody>
          <PanelTitle>Modify <TitleCaret $color="#a3abb4" /></PanelTitle>
        </Panel>

        <Panel $w={138}>
          <PanelBody>
            <LargeTool $w={82}>
              <LargeIcon><PlaneIcon /></LargeIcon>Plane
              <BelowCaret />
            </LargeTool>
            <ToolColumn $w={50} $left={4}>
              <IconOnly icon="workaxis" caret />
              <IconOnly icon="workpoint" caret />
              <IconOnly icon="ucs" />
            </ToolColumn>
          </PanelBody>
          <PanelTitle>Work Features</PanelTitle>
        </Panel>

        <Panel $w={95}>
          <PanelBody>
            <LargeTool $w={95}>
              <LargeIcon><ShapeIcon /></LargeIcon>Shape<span>Generator</span>
            </LargeTool>
          </PanelBody>
          <PanelTitle>Explore</PanelTitle>
        </Panel>

        <Panel $w={81}>
          <PanelBody $pad={12}>
            <ToolColumn $w={36}>
              <IconOnly icon="rect" />
              <IconOnly icon="circ" />
              <IconOnly icon="sketchpat" />
            </ToolColumn>
            <ToolColumn $w={24}>
              <IconOnly icon="mirror" />
            </ToolColumn>
          </PanelBody>
          <PanelTitle>Pattern</PanelTitle>
        </Panel>

        <Panel $w={144}>
          <PanelBody>
            <LargeTool $w={102}>
              <LargeIcon><BoxIcon /></LargeIcon>Box
              <BelowCaret />
            </LargeTool>
            <ToolColumn $w={24} $left={-10}>
              <IconOnly icon="freeface" />
              <IconOnly icon="freeconv" />
            </ToolColumn>
          </PanelBody>
          <PanelTitle>Create Freeform</PanelTitle>
        </Panel>

        <Panel $w={120}>
          <PanelBody $pad={12}>
            <ToolColumn $w={37}>
              <IconOnly icon="s1" />
              <IconOnly icon="s4" />
              <IconOnly icon="s7" />
            </ToolColumn>
            <ToolColumn $w={37}>
              <IconOnly icon="s2" />
              <IconOnly icon="s5" />
              <IconOnly icon="s8" />
            </ToolColumn>
            <ToolColumn $w={24}>
              <IconOnly icon="s3" />
              <IconOnly icon="s6" />
              <IconOnly icon="s9" />
            </ToolColumn>
          </PanelBody>
          <PanelTitle>Surface</PanelTitle>
        </Panel>

        <Panel $w={100}>
          <PanelBody>
            <LargeTool $w={100}>
              <LargeIcon><StressIcon /></LargeIcon>Stress<span>Analysis</span>
            </LargeTool>
          </PanelBody>
          <PanelTitle>Simulation</PanelTitle>
        </Panel>

        <Panel $w={110}>
          <PanelBody>
            <LargeTool $w={110}>
              <LargeIcon><ConvertIcon /></LargeIcon>Convert to<span>Sheet Metal</span>
            </LargeTool>
          </PanelBody>
          <PanelTitle>Convert</PanelTitle>
        </Panel>

        <Panel $w={95} $last>
          <PanelBody $pad={12}>
            <SmallTool>
              <Dropdown />
              <Caret />
            </SmallTool>
          </PanelBody>
        </Panel>
      </Ribbon>

      <WorkArea>
        <Browser>
          <BrowserHead>
            <BrowserTab>
              <Ico size={20}>{icons.cube}</Ico>
              <CloseIcon size={13} color="#e6e8ea" />
            </BrowserTab>
            <BrowserHeadTools>
              <PlusIcon />
              <Burger />
            </BrowserHeadTools>
          </BrowserHead>
          <TreeWrap>
            <Tree>
              <TreeGuide />
              <TreeRow $root>
                <Ico>{icons.root}</Ico>
                dvaras6.ipt
              </TreeRow>
              {treeRows.map(([icon, label, off, leaf]) => (
                <TreeRow key={label} $off={off}>
                  {!leaf && <Expander />}
                  <Leader />
                  <Ico>{icons[icon]}</Ico>
                  {label}
                </TreeRow>
              ))}
            </Tree>
            <VScroll>
              <Chevron><ChevronIcon dir="up" /></Chevron>
              <ScrollThumb />
              <Chevron $down><ChevronIcon dir="down" /></Chevron>
            </VScroll>
          </TreeWrap>
          <HScroll>
            <HArrow><ChevronIcon dir="left" /></HArrow>
            <HThumb />
            <HArrow $right><ChevronIcon dir="right" /></HArrow>
          </HScroll>
        </Browser>

        <Main>
          <Viewport>
            <Building />
            <Triad viewBox="0 0 100 100">
              <path d="M20 60V20" stroke="#1313a8" strokeWidth="2" />
              <path d="M20 60L42 47" stroke="#3ea03e" strokeWidth="1.5" />
              <path d="M20 60L42 72" stroke="#8c2b33" strokeWidth="1.5" />
              <path d="M20 22L30 38H11z" fill="#0a0aa6" />
              <path d="M36 40l15 -2-3 13-8 2z" fill="#0c8a0c" />
              <path d="M36 76l6-11h6l4 12z" fill="#a80c0c" />
              <text x="14" y="19" fill="#1c3ec4" fontSize="18" fontFamily="Liberation Sans, sans-serif">Z</text>
              <text x="53" y="42" fill="#1fd04a" fontSize="18" fontFamily="Liberation Sans, sans-serif">Y</text>
              <text x="53" y="87" fill="#c4183a" fontSize="18" fontFamily="Liberation Sans, sans-serif">X</text>
            </Triad>
            <ViewCube viewBox="0 0 90 90">
              <ellipse cx="46" cy="82" rx="30" ry="7" fill="#1c222b" opacity="0.35" />
              <path d="M7 18L44 3 82 18 75 60 44 83 12 62z" fill="#686c72" />
              <path d="M7 18L44 3 82 18 44 40z" fill="#7a7d82" />
              <path d="M44 40L82 18 75 60 44 83z" fill="#63676d" />
              <path d="M7 18L44 40V83L12 62z" fill="#6f7378" />
              <text x="47" y="22" fill="#585b60" fontSize="9" textAnchor="middle" transform="rotate(22 47 22)" fontFamily="Liberation Sans, sans-serif">TOP</text>
              <text x="25" y="55" fill="#585b60" fontSize="9" textAnchor="middle" transform="rotate(22 25 55)" fontFamily="Liberation Sans, sans-serif">FRONT</text>
              <text x="62" y="52" fill="#585b60" fontSize="9" textAnchor="middle" transform="rotate(-28 62 52)" fontFamily="Liberation Sans, sans-serif">RIGHT</text>
            </ViewCube>
            <WindowButtons>
              <svg width="13" height="4" viewBox="0 0 13 4">
                <rect width="13" height="4" fill="#dfe2e6" />
              </svg>
              <svg width="19" height="16" viewBox="0 0 19 16">
                <path d="M1 1h17v14H1zM1 4h17M10 4v11" fill="none" stroke="#dfe2e6" strokeWidth="1.8" />
              </svg>
              <CloseIcon size={16} color="#e6e8ea" w={2.2} />
            </WindowButtons>
            <NavBar>
              <NavBarArt />
            </NavBar>
          </Viewport>
          <DocBar>
            <DocTab>
              dvaras6.ipt
              <CloseIcon size={13} color="#9aa1aa" w={3} />
            </DocTab>
            <BarMenu>
              <Burger w={22} h={18} color="#b4bac2" />
            </BarMenu>
          </DocBar>
        </Main>
      </WorkArea>

      <StatusBar>
        <StatusText>Ready</StatusText>
        <StatusCell>1</StatusCell>
        <StatusLastCell>1</StatusLastCell>
      </StatusBar>
    </Page>
  );
}
